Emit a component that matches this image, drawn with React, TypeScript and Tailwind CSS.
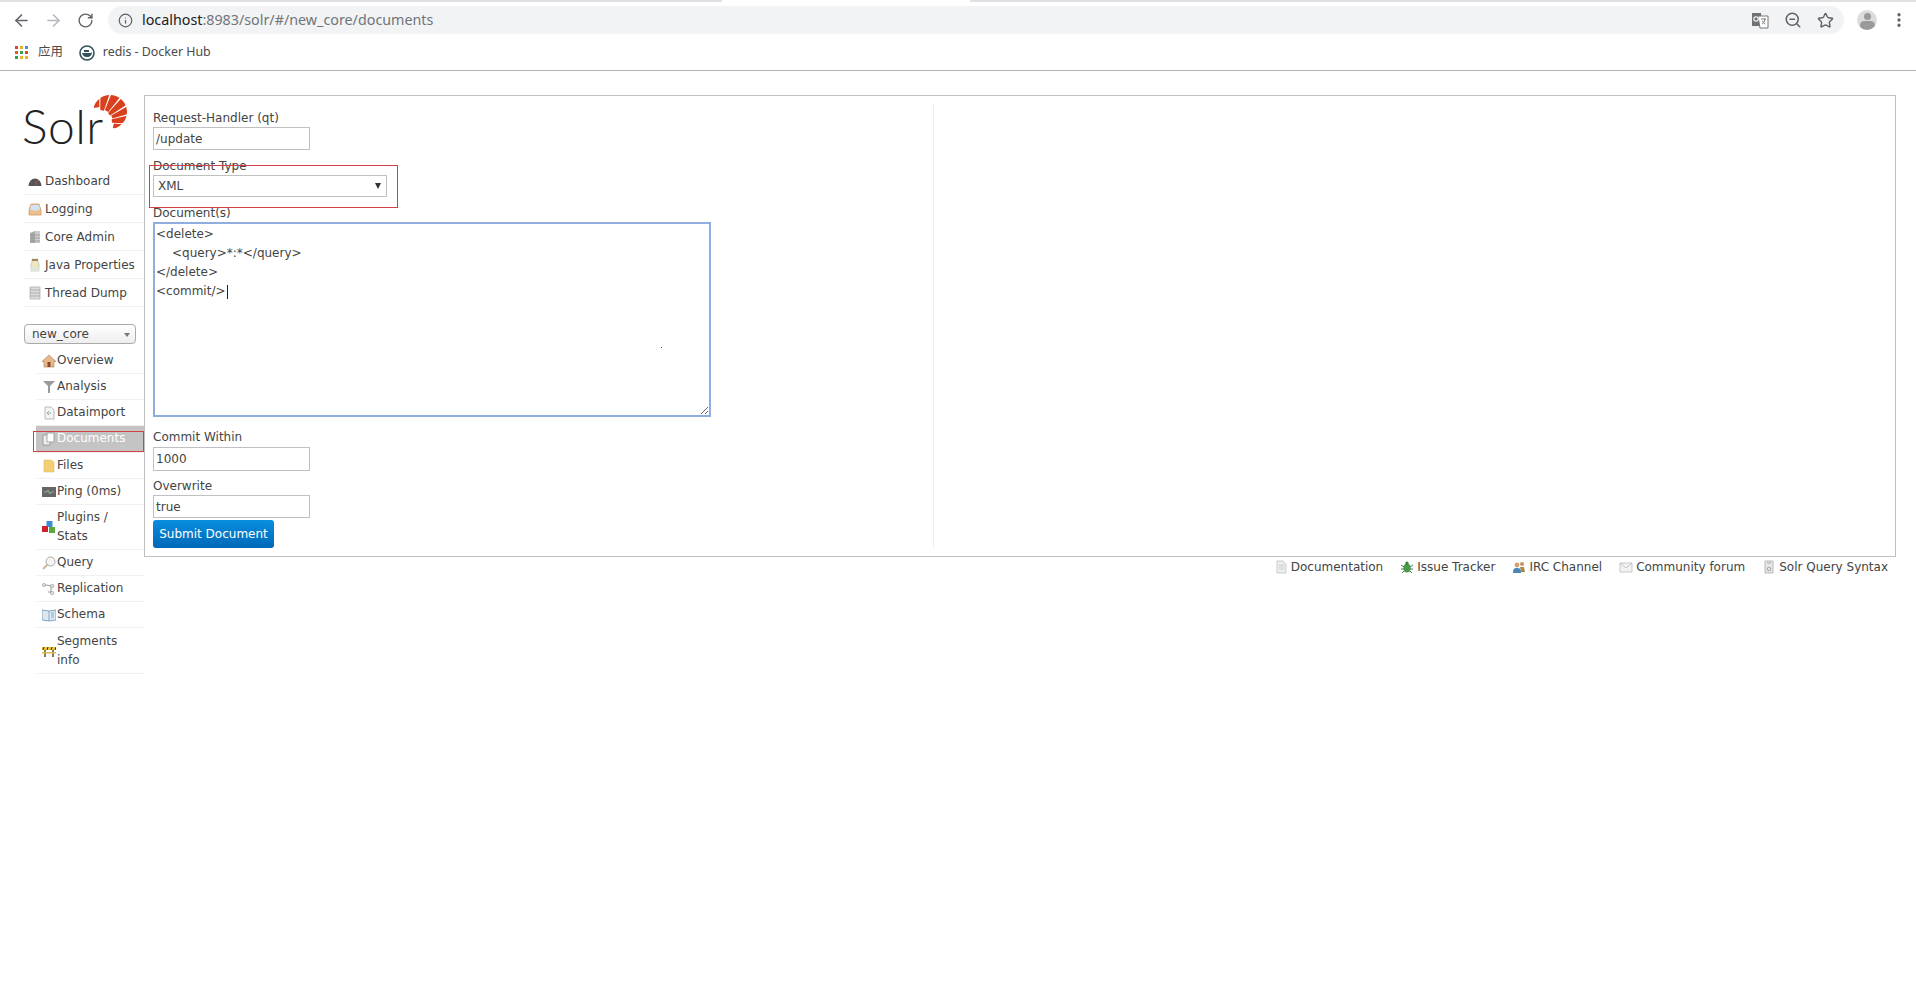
import React from "react";
import { ArrowLeft, ArrowRight, RotateCw, Info, ZoomOut, Star, EllipsisVertical } from "lucide-react";

const S = ({ children, w = 14, h = 14 }: { children: React.ReactNode; w?: number; h?: number }) => (
  <svg width={w} height={h} viewBox="0 0 14 14" className="shrink-0">{children}</svg>
);

const icons: Record<string, React.ReactNode> = {
  dashboard: <S><path d="M0.500 12a6.500 7.500 0 0 1 13 0z" fill="#555" /><path d="M7 11l3-5" stroke="#b55" strokeWidth="1" /></S>,
  logging: <S><path d="M1 8l2-6h8l2 6v5H1z" fill="#eec08c" stroke="#c9905a" strokeWidth=".7" /><path d="M3 3h8l1 5H9l-1 1H6L5 8H2z" fill="#cfe3f2" /></S>,
  core: <S><path d="M2 3l5-2v12H2z" fill="#aaa" /><path d="M7 1h5v12H7z" fill="#ccc" /><path d="M3 5h9M3 8h9M3 11h9" stroke="#888" strokeWidth=".6" /></S>,
  java: <S><path d="M4 1h6v3l1 2v7H3V6l1-2z" fill="#f0e6c0" stroke="#bbb" strokeWidth=".7" /><path d="M4 1h6v2H4z" fill="#a08a60" /><path d="M3 9h8v4H3z" fill="#dfe8d8" /></S>,
  thread: <S><path d="M2 1h10v12H2z" fill="#ddd" stroke="#aaa" strokeWidth=".7" /><path d="M2 4h10M2 7h10M2 10h10" stroke="#999" strokeWidth=".7" /></S>,
  overview: <S><path d="M7 1L0 7.500h2V13h10V7.500h2z" fill="#e6b98a" stroke="#a8785a" strokeWidth=".6" /><path d="M5.500 8h3v5h-3z" fill="#8a4a2a" /></S>,
  analysis: <S><path d="M1 1h12L8 6v7H6V6z" fill="#999" /></S>,
  dataimport: <S><path d="M3 1h6l3 3v9H3z" fill="#f4f4f4" stroke="#aaa" strokeWidth=".8" /><path d="M9 7H5m2-2L5 7l2 2" stroke="#7a9" strokeWidth=".8" fill="none" /></S>,
  documents: <S><path d="M1 3h7v10H1z" fill="#eee" stroke="#888" strokeWidth=".7" /><path d="M5 1h7v9H5z" fill="#fff" stroke="#888" strokeWidth=".7" /></S>,
  files: <S><path d="M2 1h7l3 2v10H2z" fill="#f2cf73" stroke="#d8b25a" strokeWidth=".5" /></S>,
  ping: <S><path d="M0 2h14v10H0z" fill="#666" /><path d="M2 7h3l1-2 2 4 1-2h3" stroke="#9c9" strokeWidth=".8" fill="none" /></S>,
  plugins: <S><path d="M4.500 1h6v6h-6z" fill="#3b8fd0" /><path d="M0 6h6v6H0z" fill="#d0202c" /><path d="M7 7h6v6H7z" fill="#5aa83a" /></S>,
  query: <S><circle cx="8.500" cy="5.500" r="4.500" fill="#f4f4f4" stroke="#aaa" /><path d="M5.500 8.500L1 13" stroke="#c8b896" strokeWidth="2" /></S>,
  replication: <S><path d="M1 3h3M4 3l5 1v7M6 10h3" stroke="#999" fill="none" /><circle cx="2" cy="3" r="1.600" fill="#ddd" stroke="#999" strokeWidth=".6" /><circle cx="10" cy="4" r="1.800" fill="#ddd" stroke="#999" strokeWidth=".6" /><circle cx="10" cy="11" r="1.800" fill="#ddd" stroke="#999" strokeWidth=".6" /></S>,
  schema: <S><path d="M0 2l7 1 7-1v10l-7 1-7-1z" fill="#dbe8f2" stroke="#6a94b4" strokeWidth=".8" /><path d="M7 3v10M9 5h3M9 7h3M9 9h3" stroke="#6a94b4" strokeWidth=".7" /></S>,
  segments: <S><path d="M2 5h2v8H2zM10 5h2v8h-2z" fill="#8a7a50" /><path d="M0 3h14v3H0z" fill="#e8c030" /><path d="M2 3l-1 3M6 3L5 6M10 3L9 6M14 3l-1 3" stroke="#333" strokeWidth="1" /><path d="M0 8h14v1.500H0z" fill="#d4b85c" /></S>,
  doc: <S><path d="M3 1h6l3 3v9H3z" fill="#eee" stroke="#bbb" strokeWidth=".7" /><path d="M5 5h5M5 7h5M5 9h5" stroke="#bbb" strokeWidth=".6" /></S>,
  bug: <S><ellipse cx="7" cy="8" rx="3.600" ry="4.500" fill="#4a9a4a" /><circle cx="7" cy="3" r="1.600" fill="#3a7a3a" /><path d="M1 5l3 2M13 5l-3 2M1 9h3M13 9h-3M2 13l2-2M12 13l-2-2" stroke="#4a7a4a" /></S>,
  irc: <S><circle cx="5" cy="5" r="2.400" fill="#d8a070" /><path d="M1 13c0-4 1-5 4-5s4 1 4 5z" fill="#4a86b8" /><circle cx="10" cy="4" r="2" fill="#c89060" /><path d="M8 7h4l1 5H9z" fill="#a88a4a" /></S>,
  mail: <S><path d="M1 3h12v9H1z" fill="#f2f2f2" stroke="#bbb" strokeWidth=".8" /><path d="M1 3l6 5 6-5" stroke="#bbb" strokeWidth=".8" fill="none" /></S>,
  syntax: <S><path d="M3 1h8v12H3z" fill="#e8e8e8" stroke="#aaa" strokeWidth=".8" /><circle cx="7" cy="9" r="1.800" fill="none" stroke="#888" strokeWidth=".7" /><path d="M5 3h4" stroke="#aaa" /></S>,
};

const SunLogo = () => {
  const fx = 8, fy = 27;
  const wedges: [number, number][] = [[-112, -92], [-89, -71], [-68, -51], [-48, -33], [-30, -16], [-13, 3], [6, 24]];
  return (
    <svg width="36" height="36" viewBox="0 0 36 36" className="shrink-0">
      <defs>
        <clipPath id="sunclip"><circle cx="18" cy="17" r="17" /></clipPath>
      </defs>
      <g clipPath="url(#sunclip)">
        {wedges.map(([a, b], i) => {
          const p = (d: number, r: number) => `${fx + r * Math.cos((d * Math.PI) / 180)} ${fy + r * Math.sin((d * Math.PI) / 180)}`;
          const inner = [15, 12, 13, 12, 13, 12, 14][i];
          return <path key={i} d={`M${p(a, inner)}L${p(a, 50)}L${p(b, 50)}L${p(b, inner)}Z`} fill="#d9411e" />;
        })}
      </g>
    </svg>
  );
};

const TopItem = ({ icon, label }: { icon: string; label: string }) => (
  <div className="flex items-center h-[28px] gap-[3px] pl-[4px] border-b border-[#f0f0f0]">
    {icons[icon]}
    <span>{label}</span>
  </div>
);

const CoreItem = ({ icon, label, active, extra = "py-[3px]" }: { icon: string; label: string; active?: boolean; extra?: string }) => (
  <div className={`flex items-center gap-[1px] pl-[6px] border-b border-[#f0f0f0] leading-[19px] ${extra} ${active ? "bg-[#c4c4c4] text-white" : ""}`}>
    {icons[icon]}
    <span className="whitespace-pre-line">{label}</span>
  </div>
);

const Field = ({ label, value, className }: { label: string; value: string; className: string }) => (
  <div>
    <div className="h-[18px] leading-[18px]">{label}</div>
    <div className={`w-[157px] border border-[#c0c0c0] pl-[2px] flex items-center ${className}`}>{value}</div>
  </div>
);

const FootLink = ({ icon, label }: { icon: string; label: string }) => (
  <div className="flex items-center gap-[3px]">
    {icons[icon]}
    <span>{label}</span>
  </div>
);

const dots = ["#d8442f", "#e8b32a", "#3f8fdc", "#e05b2a", "#3aa05a", "#d8442f", "#2f9e5a", "#e8b32a", "#e8b32a"];

export default function App() {
  return (
    <div className="h-[1008px] overflow-hidden bg-white text-[12px] text-[#444] font-['DejaVu_Sans',sans-serif]">
      <header className="h-[71px] border-b border-[#b4b4b4] font-['Noto_Sans','Noto_Sans_CJK_SC',sans-serif]">
        <div className="h-[2px] bg-[#dfe1e5] flex justify-center"><div className="w-[248px] h-full bg-white -translate-x-[112px]" /></div>
        <div className="h-[36px] flex items-center pl-[12px] pr-[8px]">
          <ArrowLeft size={19} strokeWidth={2} color="#5f6368" />
          <ArrowRight size={19} strokeWidth={2} color="#b5b8bc" className="ml-[13px]" />
          <RotateCw size={17} strokeWidth={2} color="#5f6368" className="ml-[14px]" />
          <div className="ml-[14px] flex-1 h-[28px] rounded-full bg-[#f1f3f4] flex items-center pl-[10px] pr-[10px]">
            <Info size={15} strokeWidth={2} color="#5f6368" />
            <span className="ml-[9px] mb-[1px] text-[14.3px] text-[#70757a]"><span className="text-[#202124]">localhost</span>:8983/solr/#/new_core/documents</span>
            <div className="ml-auto flex items-center gap-[15px]">
              <svg width="18" height="18" viewBox="0 0 18 18"><path d="M1 2h9l1 13H1z" fill="#6f7275" /><path d="M7 5h10v12H9z" fill="#fff" stroke="#777" /><circle cx="5" cy="8" r="2.200" fill="none" stroke="#fff" strokeWidth="1.100" /><path d="M10 8h5m-1 0c-.5 3-2 4.500-3 5m.5-3c.5 1.500 1.500 2.500 3 3" stroke="#777" fill="none" /></svg>
              <ZoomOut size={18} strokeWidth={2} color="#5f6368" />
              <Star size={17} strokeWidth={2} color="#5f6368" />
            </div>
          </div>
          <div className="ml-[13px] w-[20px] h-[20px] rounded-full bg-[#dcdcdc] overflow-hidden flex flex-col items-center">
            <div className="mt-[3px] w-[7px] h-[7px] rounded-full bg-[#9a9a9a]" />
            <div className="mt-[1px] w-[15px] h-[9px] rounded-full bg-[#9a9a9a]" />
          </div>
          <EllipsisVertical size={18} strokeWidth={2.400} color="#5f6368" className="ml-[13px]" />
        </div>
        <div className="h-[27px] flex items-center pl-[15px] pt-[2px] text-[12.4px] text-[#4a4a4a]">
          <div className="grid grid-cols-3 gap-[2px] w-[13px]">
            {dots.map((c, i) => <div key={i} style={{ background: c }} className="h-[3px] w-[3px]" />)}
          </div>
          <span className="ml-[10px]">应用</span>
          <svg width="16" height="16" viewBox="0 0 16 16" className="ml-[16px]"><circle cx="8" cy="8" r="7" fill="#fff" stroke="#33505e" strokeWidth="1.600" /><path d="M3 8h8c1 0 2-1 2-1 0 3-2 5-5 5S3.500 10 3 8z" fill="#33505e" /><path d="M5 5h5v2H5z" fill="#33505e" /></svg>
          <span className="ml-[8px]">redis - Docker Hub</span>
        </div>
      </header>

      <div className="flex pt-[24px] pr-[20px]">
        <aside className="w-[144px] shrink-0 pl-[24px]">
          <div className="h-[52px] flex items-end relative">
            <span className="font-['Lato',sans-serif] font-light text-[48px] leading-[52px] text-[#222] -ml-[2px] tracking-[0.5px] -mb-[5px]">Solr</span>
            <div className="absolute left-[68px] top-0"><SunLogo /></div>
          </div>
          <nav className="mt-[20px]">
            <TopItem icon="dashboard" label="Dashboard" />
            <TopItem icon="logging" label="Logging" />
            <TopItem icon="core" label="Core Admin" />
            <TopItem icon="java" label="Java Properties" />
            <TopItem icon="thread" label="Thread Dump" />
          </nav>
          <div className="mt-[17px] w-[112px] h-[20px] rounded-[4px] border border-[#aaa] bg-gradient-to-b from-white to-[#eee] flex items-center pl-[7px] pr-[5px]">
            <span>new_core</span>
            <span className="ml-auto mt-[2px] w-0 h-0 border-x-[3px] border-x-transparent border-t-[4px] border-t-[#777]" />
          </div>
          <div className="mt-[4px] ml-[12px] relative">
            <CoreItem icon="overview" label="Overview" />
            <CoreItem icon="analysis" label="Analysis" />
            <CoreItem icon="dataimport" label="Dataimport" />
            <CoreItem icon="documents" label="Documents" active extra="pt-[3px] pb-[4px]" />
            <CoreItem icon="files" label="Files" />
            <CoreItem icon="ping" label="Ping (0ms)" />
            <CoreItem icon="plugins" label={"Plugins /\nStats"} />
            <CoreItem icon="query" label="Query" />
            <CoreItem icon="replication" label="Replication" />
            <CoreItem icon="schema" label="Schema" />
            <CoreItem icon="segments" label={"Segments\ninfo"} extra="pt-[4px] pb-[3px]" />
            <div className="absolute left-[-3px] right-0 top-[83px] h-[21px] border border-[#d2404a]" />
          </div>
        </aside>

        <main className="flex-1">
          <div className="h-[462px] border border-[#c0c0c0] flex">
            <div className="w-[789px] my-[8px] pl-[8px] pt-[5px] border-r border-[#eeeeee] relative">
              <Field label="Request-Handler (qt)" value="/update" className="h-[23px]" />
              <div className="mt-[7px] h-[18px] leading-[18px]">Document Type</div>
              <div className="w-[234px] h-[22px] border border-[#c0c0c0] flex items-center pl-[4px] pr-[5px]">
                <span>XML</span>
                <span className="ml-auto w-0 h-0 border-x-[3.500px] border-x-transparent border-t-[6px] border-t-[#333]" />
              </div>
              <div className="mt-[7px] h-[18px] leading-[18px]">Document(s)</div>
              <div className="w-[558px] h-[195px] border-2 border-[#8fadde] pl-[1px] pt-[1px] leading-[19px] relative whitespace-pre">
                <div>{"<delete>"}</div>
                <div className="pl-[16px]">{"<query>*:*</query>"}</div>
                <div>{"</delete>"}</div>
                <div className="flex items-center">{"<commit/>"}<span className="ml-[1px] w-px h-[14px] bg-[#222]" /></div>
                <svg width="10" height="10" viewBox="0 0 10 10" className="absolute right-0 bottom-0"><path d="M9 2L2 9M9 6L6 9" stroke="#666" strokeWidth="1" /></svg>
                <div className="absolute left-[506px] top-[123px] w-px h-px bg-[#555]" />
              </div>
              <div className="mt-[11px]">
                <Field label="Commit Within" value="1000" className="mt-[1px] h-[24px]" />
              </div>
              <div className="mt-[6px]">
                <Field label="Overwrite" value="true" className="h-[23px]" />
              </div>
              <div className="mt-[2px] w-[121px] h-[28px] rounded-[3px] bg-gradient-to-b from-[#0a8ee0] to-[#0068b8] text-white whitespace-nowrap flex items-center justify-center text-[12px]">
                Submit Document
              </div>
              <div className="absolute left-[4px] top-[61px] w-[249px] h-[43px] border border-[#d2404a]" />
            </div>
          </div>
          <div className="mt-[1px] h-[18px] flex items-center justify-end gap-[17px] pr-[8px]">
            <FootLink icon="doc" label="Documentation" />
            <FootLink icon="bug" label="Issue Tracker" />
            <FootLink icon="irc" label="IRC Channel" />
            <FootLink icon="mail" label="Community forum" />
            <FootLink icon="syntax" label="Solr Query Syntax" />
          </div>
        </main>
      </div>
    </div>
  );
}
